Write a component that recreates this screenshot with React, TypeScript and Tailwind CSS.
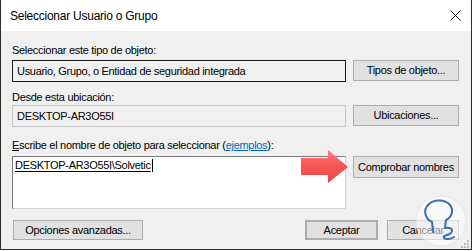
import React from "react";

const font = { fontFamily: '"Liberation Sans", Arial, sans-serif' };

function Btn({ children, className = "" }: { children: React.ReactNode; className?: string }) {
  return (
    <div
      className={
        "flex items-center justify-center whitespace-nowrap bg-[#e1e1e1] border border-[#adadad] text-[11px] tracking-[-0.3px] text-black leading-none " +
        className
      }
    >
      {children}
    </div>
  );
}

export default function App() {
  return (
    <div className="relative w-[472px] h-[251px] overflow-hidden bg-white" style={font}>
      <div className="flex flex-col w-[472px] h-[250px] border-l border-r border-b border-[#2b2b2b]">
        {/* title bar */}
        <div className="h-[31px] bg-white flex items-center pl-[9px] pr-[10px]">
          <span className="text-[12px] tracking-[-0.25px] text-black flex-1">Seleccionar Usuario o Grupo</span>
          <svg width="11" height="11" viewBox="0 0 11 11">
            <path d="M0.5 0.5 L10.5 10.5 M10.5 0.5 L0.5 10.5" stroke="#111" strokeWidth="1" />
          </svg>
        </div>
        {/* body */}
        <div className="flex-1 bg-[#f0f0f0] pl-[11px] text-[11px] tracking-[-0.3px] text-black">
          <div className="mt-[12px] h-[15px] leading-[15px]">Seleccionar este tipo de objeto:</div>
          <div className="mt-[2px] flex">
            <div className="w-[334px] h-[22px] border border-[#1a1a1a] bg-[#f0f0f0] flex items-center pl-[4px]">
              Usuario, Grupo, o Entidad de seguridad integrada
            </div>
            <Btn className="ml-[7px] w-[106px] h-[21px]">Tipos de objeto...</Btn>
          </div>
          <div className="mt-[8px] h-[15px] leading-[15px]">Desde esta ubicación:</div>
          <div className="flex">
            <div className="w-[334px] h-[22px] border border-[#c4c4c4] bg-[#f0f0f0] flex items-center pl-[4px]">
              DESKTOP-AR3O55I
            </div>
            <Btn className="ml-[7px] w-[106px] h-[21px]">Ubicaciones...</Btn>
          </div>
          <div className="mt-[11px] h-[15px] leading-[15px]">
            <span className="underline">E</span>scribe el nombre de objeto para seleccionar (
            <span className="text-[#0066cc] underline">ejemplos</span>):
          </div>
          <div className="mt-[3px] flex">
            <div className="w-[334px] h-[53px] bg-white border-t border-l border-[#7a7a7a] border-r-[#d0d0d0] border-b-[#d0d0d0] border-r border-b pl-[2px] pt-[1px]">
              <div className="flex items-center h-[15px]">
                <span className="underline underline-offset-[2px]">DESKTOP-AR3O55I\Solvetic</span>
                <span className="inline-block w-[1px] h-[13px] bg-black ml-[1px]" />
              </div>
            </div>
            <Btn className="ml-[7px] w-[106px] h-[22px]">Comprobar nombres</Btn>
          </div>
          <div className="mt-[11px] flex">
            <Btn className="ml-[1px] w-[130px] h-[20px]">Opciones avanzadas...</Btn>
            <Btn className="ml-[162px] w-[73px] h-[20px] border-2 border-[#0078d7]">Aceptar</Btn>
            <Btn className="ml-[9px] w-[72px] h-[20px]">Cancelar</Btn>
          </div>
        </div>
      </div>

      {/* red arrow */}
      <svg className="absolute left-[300px] top-[149px]" width="50" height="36" viewBox="0 0 50 36">
        <defs>
          <linearGradient id="ag" x1="0" y1="0" x2="0" y2="1">
            <stop offset="0" stopColor="#ff7a7a" />
            <stop offset="0.45" stopColor="#f85858" />
            <stop offset="1" stopColor="#ee4545" />
          </linearGradient>
        </defs>
        <polygon points="1,9 28,9 28,1 48,18 28,34 28,26 1,26" fill="url(#ag)" />
      </svg>

      {/* logo watermark */}
      <svg className="absolute left-[414px] top-[194px]" width="56" height="56" viewBox="0 0 56 56">
        <circle cx="27" cy="27" r="25" fill="#ffffff" fillOpacity="0.55" stroke="#e6e6e6" strokeWidth="1" />
        <path
          d="M19 38 L18 28 C11 25 9 16 14 11 C19 5 31 5 36 11 C40 16 38 23 32 26 L31 34 C36 33 40 35 37 39 C34 42 28 41 30 44 C32 46 37 45 40 43"
          fill="none"
          stroke="#3d6fb0"
          strokeWidth="2"
          strokeLinecap="round"
          strokeLinejoin="round"
        />
      </svg>

      {/* resize grip */}
      <svg className="absolute left-[461px] top-[240px]" width="9" height="9" viewBox="0 0 9 9">
        <rect x="6" y="0" width="2" height="2" fill="#bdbdbd" />
        <rect x="3" y="3" width="2" height="2" fill="#bdbdbd" />
        <rect x="6" y="3" width="2" height="2" fill="#bdbdbd" />
        <rect x="0" y="6" width="2" height="2" fill="#bdbdbd" />
        <rect x="3" y="6" width="2" height="2" fill="#bdbdbd" />
        <rect x="6" y="6" width="2" height="2" fill="#bdbdbd" />
      </svg>
    </div>
  );
}
